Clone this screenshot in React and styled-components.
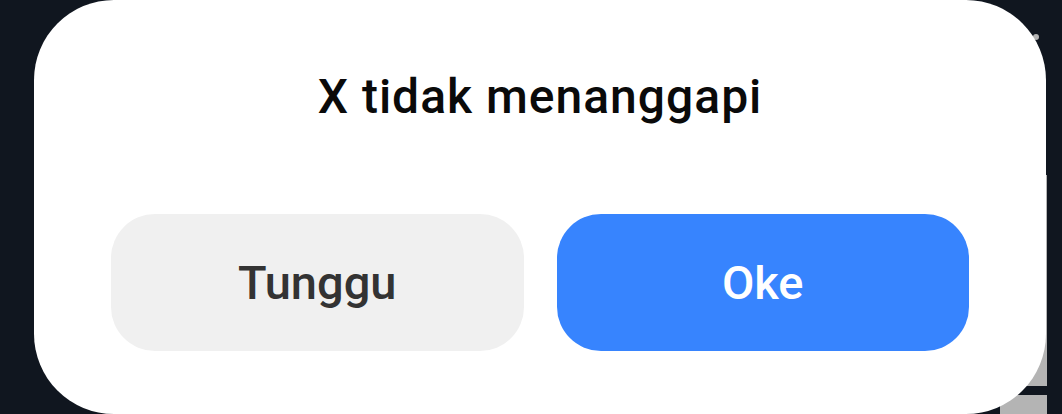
import React from "react";
import styled, { createGlobalStyle } from "styled-components";

const Global = createGlobalStyle`
  html, body {
    margin: 0;
    padding: 0;
    background: #10161f;
    width: 1062px;
    height: 414px;
    overflow: hidden;
  }
  * { box-sizing: border-box; }
`;

/* both layers share one grid cell: the app underneath, the dialog on top */
const Screen = styled.div`
  display: grid;
  grid-template: 414px / 1062px;
  width: 1062px;
  height: 414px;
  overflow: hidden;
  background: #10161f;
  font-family: Roboto, "Noto Sans", sans-serif;
`;

const Underlay = styled.div`
  grid-area: 1 / 1;
  margin-left: 1000px;
  width: 47px;
  padding-top: 34px;
  display: flex;
  flex-direction: column;
  align-items: flex-end;
`;

const Dot = styled.span`
  width: 6px;
  height: 6px;
  border-radius: 50%;
  background: #b4b4b4;
  margin-right: 8px;
`;

const Tick = styled.span`
  width: 3px;
  height: 10px;
  margin-top: 4px;
  margin-right: 10px;
  background: #b4b4b4;
`;

const Slab = styled.div`
  align-self: stretch;
  height: ${(p) => p.$h}px;
  margin-top: ${(p) => p.$gap}px;
  background: #b4b4b4;
`;

const Dialog = styled.div`
  grid-area: 1 / 1;
  margin-left: 34px;
  width: 1012px;
  height: 414px;
  background: #ffffff;
  border-radius: 80px;
  display: flex;
  flex-direction: column;
  padding: 0 77px;
`;

const Title = styled.h1`
  margin: 73px 0 0;
  font-size: 48px;
  line-height: 48px;
  height: 48px;
  letter-spacing: 1px;
  font-weight: 500;
  color: #0a0a0a;
  text-align: center;
  white-space: nowrap;
`;

const Actions = styled.div`
  margin-top: 93px;
  display: grid;
  grid-template-columns: 1fr 1fr;
  gap: 33px;
`;

const Button = styled.button`
  height: 137px;
  border: none;
  border-radius: 44px;
  background: ${(p) => (p.$primary ? "#3784fe" : "#f0f0f0")};
  color: ${(p) => (p.$primary ? "#ffffff" : "#333333")};
  font-family: Roboto, "Noto Sans", sans-serif;
  font-size: 47px;
  line-height: 47px;
  font-weight: 500;
  display: flex;
  align-items: center;
  justify-content: center;
  padding: 0;
  cursor: pointer;
`;

export default function App() {
  return (
    <>
      <Global />
      <Screen>
        <Underlay>
          <Dot />
          <Tick />
          <Slab $gap={121} $h={218} />
          <Slab $gap={9} $h={20} />
        </Underlay>
        <Dialog>
          <Title>X tidak menanggapi</Title>
          <Actions>
            <Button>Tunggu</Button>
            <Button $primary>Oke</Button>
          </Actions>
        </Dialog>
      </Screen>
    </>
  );
}
